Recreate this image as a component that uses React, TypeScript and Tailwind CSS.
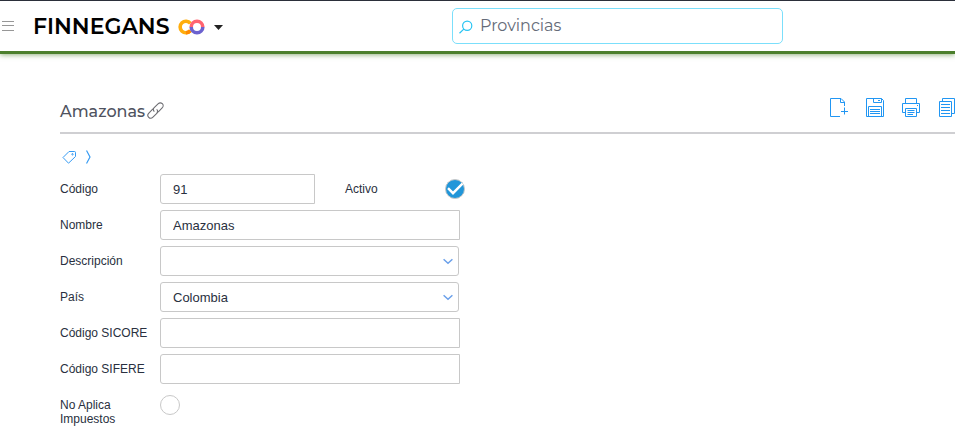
import React, { useState } from "react";

const fieldClass =
  "block h-[30px] border border-[#c8c8c8] bg-white px-3 text-[13px] text-[#293040] outline-none focus:border-[#6ea8e8]";

function Row({ id, label, children }: { id: string; label: string; children: React.ReactNode }) {
  return (
    <div className="grid grid-cols-[100px_1fr]">
      <label htmlFor={id} className="w-[90px] pt-2 text-xs leading-[14px]">
        {label}
      </label>
      <div className="flex min-h-[30px] items-start">{children}</div>
    </div>
  );
}

function TextField({ id, value = "", width = "w-[300px]" }: { id: string; value?: string; width?: string }) {
  return <input id={id} type="text" defaultValue={value} className={`${fieldClass} ${width} rounded-l-[3px]`} />;
}

function SelectField({ id, options }: { id: string; options: string[] }) {
  return (
    <div className="relative w-[299px]">
      <select id={id} className={`${fieldClass} w-full appearance-none rounded-[3px] pt-0.5`}>
        {options.map((o) => (
          <option key={o}>{o}</option>
        ))}
      </select>
      <svg className="pointer-events-none absolute top-3 right-1.5 h-[7px] w-[10px]" viewBox="0 0 10 7" fill="none" stroke="#6ba0ea" strokeWidth="1.5">
        <path d="M.6 1.2l4.4 4L9.4 1.2" />
      </svg>
    </div>
  );
}

function RoundCheck({ id, initial = false }: { id: string; initial?: boolean }) {
  const [checked, setChecked] = useState(initial);
  return (
    <span className="relative block size-5">
      <input
        id={id}
        type="checkbox"
        checked={checked}
        onChange={(e) => setChecked(e.target.checked)}
        className="block size-5 appearance-none rounded-full border border-[#c8c8c8] bg-white checked:bg-[#2196d9]"
      />
      {checked && (
        <svg className="pointer-events-none absolute inset-0 size-5" viewBox="0 0 20 20" fill="none" stroke="#fff" strokeWidth="2.4">
          <path d="M3 9.2l5 5L17.5 4.6" />
        </svg>
      )}
    </span>
  );
}

function ToolButton({ label, children }: { label: string; children: React.ReactNode }) {
  return (
    <button type="button" aria-label={label} className="block size-5 shrink-0">
      <svg className="size-5" viewBox="0 0 20 20" fill="none" stroke="#2196f3" strokeWidth="1">
        {children}
      </svg>
    </button>
  );
}

export default function App() {
  return (
    <div className="overflow-x-hidden bg-white pb-3 font-['Liberation_Sans',Arial,sans-serif] text-[#293040]">
      <header className="grid grid-cols-[452px_minmax(0,331px)_1fr] items-center border-t border-b-3 border-t-[#2b2f3a] border-b-[#4b7f2c] py-[7px] shadow-[0_1px_5px_rgba(75,127,44,0.6)]">
        <div className="flex items-center">
          <button type="button" aria-label="Menú" className="ml-0.5 block">
            <svg className="h-3 w-3" viewBox="0 0 12 12" stroke="#979797">
              <path d="M0 1.5h12M0 5.5h12M0 10.5h12" />
            </svg>
          </button>
          <button type="button" className="ml-[19px] flex items-center pt-0.5">
            <span className="text-left font-['Montserrat','Inter',sans-serif] text-[22px] leading-8 font-semibold text-black">FINNEGANS</span>
            <svg className="ml-2 h-4 w-[27px]" viewBox="0 0 27 16" fill="none" strokeWidth="3.6">
              <path d="M12.4 4.3A5.8 5.8 0 1 0 12.4 11.7" stroke="#ffad0d" />
              <path d="M12.4 11.7A5.8 5.8 0 0 1 8 13.8" stroke="#ff8a00" />
              <path d="M24.8 8A5.8 5.8 0 0 1 13.2 8" stroke="#6c62cf" />
              <path d="M13.2 8A5.8 5.8 0 0 1 24.8 8" stroke="#ff6470" />
            </svg>
            <svg className="ml-[9px] h-[5px] w-[9px]" viewBox="0 0 9 5" fill="#222">
              <path d="M0 0h9L4.5 5z" />
            </svg>
          </button>
        </div>
        <label className="flex h-9 items-center rounded-[5px] border border-[#7bdffb] bg-white px-1.5">
          <svg className="mt-0.5 size-[14px] shrink-0" viewBox="0 0 14 14" fill="none" stroke="#28c4f3" strokeWidth="1.2">
            <circle cx="8.2" cy="5.7" r="4.6" />
            <path d="M5 8.9L.5 13.3" />
          </svg>
          <input
            type="text"
            aria-label="Buscar"
            placeholder="Provincias"
            className="ml-[7px] w-full min-w-0 bg-transparent font-['Montserrat','Inter',sans-serif] text-base text-[#656b78] outline-none placeholder:text-[#656b78]"
          />
        </label>
      </header>

      <main className="pt-10 pl-[60px]">
        <div className="flex h-10 items-start justify-between border-b-2 border-[#cfcfd2]">
          <div className="flex items-center pt-1">
            <h1 className="font-['Montserrat','Inter',sans-serif] text-base leading-7 font-medium text-[#4f5360]">Amazonas</h1>
            <button type="button" aria-label="Copiar enlace" className="mb-1 ml-0.5 block">
              <svg className="size-[17px]" viewBox="1 1 22 22" fill="none" stroke="#6d6d72" strokeWidth="1.4">
                <path d="M10.5 13.5C8.7 11.7 9 9.7 10.3 8.4L15.3 3.4C17 1.700 19.300 1.700 20.800 3.200C22.300 4.700 22.300 7 20.600 8.700L16.300 13C15.500 13.800 14.500 14.200 13.500 14.200" />
                <path d="M13.500 10.500C15.300 12.300 15 14.300 13.700 15.600L8.700 20.600C7 22.300 4.700 22.300 3.200 20.800C1.700 19.300 1.700 17 3.400 15.300L7.700 11C8.100 10.600 8.500 10.300 9 10.100" />
              </svg>
            </button>
          </div>
          <div className="-mr-0.5 flex gap-4 pt-[3px]">
            <ToolButton label="Nuevo">
              <path d="M11 19.5H1.5V1.5H12L15.5 5V9M11.5 1.5V5.5H15.5M15.500 10.500V17.500M12 14.500H19" />
            </ToolButton>
            <ToolButton label="Guardar">
              <path d="M1.500 1.500H16.500L18.500 3.500V19.500H1.500zM8.500 1.500V5.500H16.500V1.500M13 3.500H15M3.500 19.500V9.500H16.500V19.500M5 12.500H15M5 14.500H15M5 16.500H15" />
            </ToolButton>
            <ToolButton label="Imprimir">
              <path d="M4.500 6.500V1.500H15.500V6.500M4.500 15.500H1.500V6.500H18.500V15.500H15.500M16 8.500H17M4.500 11.500H15.500V19.500H4.500zM6.500 13.500H13.500M6.500 15.500H13.500M6.500 17.500H12" />
            </ToolButton>
            <ToolButton label="Copiar">
              <path d="M5.500 4V1.500H17.500V16.500H15M2.500 4.500H14.500V19.500H2.500zM4 7.500H13M4 10.500H13M4 13.500H13M4 16.500H13" />
            </ToolButton>
          </div>
        </div>

        <div className="flex h-10 items-center gap-2.5 pt-1.5 pl-0.5">
          <button type="button" aria-label="Etiquetas">
            <svg className="h-[14px] w-[14px]" viewBox="0 0 14 14" fill="none" stroke="#369bf3" strokeWidth="1">
              <path d="M1 7.500L7 1.500H12.500Q13.500 1.500 13.500 2.500V6.500L6.500 13.200z" />
              <circle cx="10.500" cy="4.300" r=".7" />
            </svg>
          </button>
          <button type="button" aria-label="Expandir">
            <svg className="h-[14px] w-[5px]" viewBox="0 0 5 14" fill="none" stroke="#369bf3" strokeWidth="1.200">
              <path d="M.5 .5L4 7L.5 13.500" />
            </svg>
          </button>
        </div>

        <form className="flex flex-col gap-1.5" onSubmit={(e) => e.preventDefault()}>
          <Row id="codigo" label="Código">
            <TextField id="codigo" value="91" width="w-[155px]" />
            <label htmlFor="activo" className="ml-[30px] w-[100px] pt-2 text-xs leading-[14px]">
              Activo
            </label>
            <div className="pt-[5px]">
              <RoundCheck id="activo" initial />
            </div>
          </Row>
          <Row id="nombre" label="Nombre">
            <TextField id="nombre" value="Amazonas" />
          </Row>
          <Row id="descripcion" label="Descripción">
            <SelectField id="descripcion" options={[""]} />
          </Row>
          <Row id="pais" label="País">
            <SelectField id="pais" options={["Colombia"]} />
          </Row>
          <Row id="sicore" label="Código SICORE">
            <TextField id="sicore" />
          </Row>
          <Row id="sifere" label="Código SIFERE">
            <TextField id="sifere" />
          </Row>
          <Row id="impuestos" label="No Aplica Impuestos">
            <div className="pt-[5px]">
              <RoundCheck id="impuestos" />
            </div>
          </Row>
        </form>
      </main>
    </div>
  );
}
